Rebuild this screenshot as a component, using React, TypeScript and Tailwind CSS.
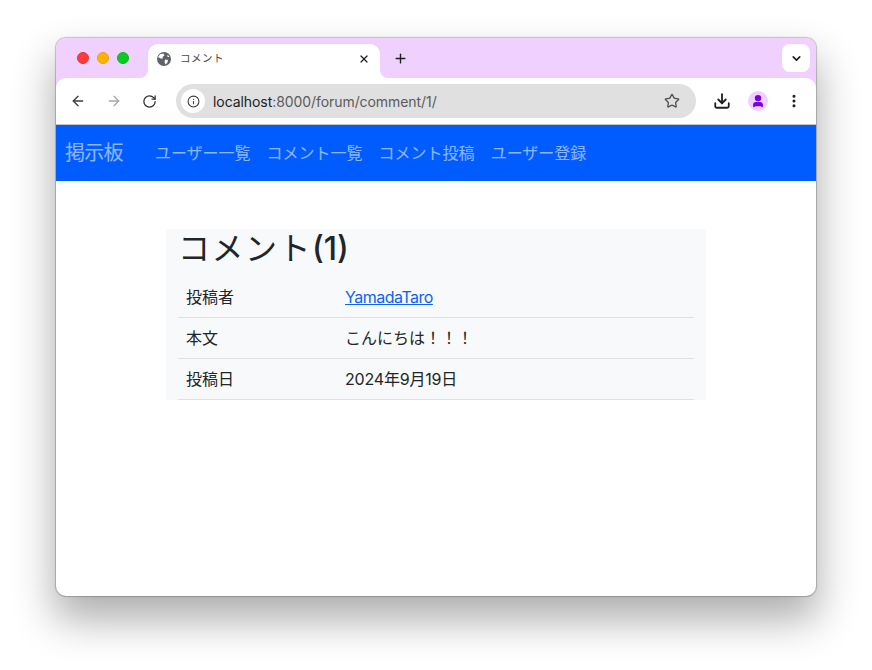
import { ArrowLeft, ArrowRight, RotateCw, Info, Star, Download, User, EllipsisVertical, X, Plus, ChevronDown } from "lucide-react";

const navItems = ["ユーザー一覧", "コメント一覧", "コメント投稿", "ユーザー登録"];
const rows = [
  { label: "投稿者", value: <a href="#" className="text-[#0a63f6] underline tracking-[-0.5px]">YamadaTaro</a> },
  { label: "本文", value: "こんにちは！！！" },
  { label: "投稿日", value: <span className="tracking-[-0.2px]">2024年9月19日</span> },
];

function Globe() {
  return (
    <svg width="14" height="14" viewBox="0 0 14 14" className="shrink-0">
      <circle cx="7" cy="7" r="7" fill="#5f6368" />
      <path d="M3 2.2 L6.5 1.5 L7.5 3.5 L5.5 5 L6 6.5 L3.5 6.5 L1 5 Z M8 7.5 L11 8 L10.5 10.5 L8.5 12.5 L7.5 10 Z M10.5 2.5 L12.5 5 L10.5 5 Z" fill="#ffffff" />
    </svg>
  );
}

export default function App() {
  return (
    <div className="w-[872px] h-[670px] bg-white pl-[56px] pt-[38px] overflow-hidden [font-family:Inter,'Noto_Sans_CJK_JP',sans-serif]">
      <div className="w-[760px] h-[558px] rounded-[10px] bg-white overflow-hidden flex flex-col shadow-[0_0_1px_1px_rgba(0,0,0,0.22),0_22px_42px_2px_rgba(0,0,0,0.32)]">
        <div className="bg-[#f0d0ff] shrink-0">
          <div className="h-[40px] flex relative">
            <div className="flex items-center gap-[8px] pl-[21px] w-[92px]">
              <span className="w-[12px] h-[12px] rounded-full bg-[#ff3b3b] border border-[#e83535]" />
              <span className="w-[12px] h-[12px] rounded-full bg-[#ffb300] border border-[#eba500]" />
              <span className="w-[12px] h-[12px] rounded-full bg-[#08cc1e] border border-[#0cb81c]" />
            </div>
            <div className="mt-[6px] w-[232px] h-[34px] bg-white rounded-t-[10px] flex items-center pl-[9px] pr-[10px] pb-[5px] relative">
              <svg width="8" height="8" viewBox="0 0 8 8" className="absolute left-[-8px] bottom-0">
                <path d="M8 0 A8 8 0 0 1 0 8 L8 8 Z" fill="#ffffff" />
              </svg>
              <svg width="8" height="8" viewBox="0 0 8 8" className="absolute right-[-8px] bottom-0">
                <path d="M0 0 A8 8 0 0 0 8 8 L0 8 Z" fill="#ffffff" />
              </svg>
              <Globe />
              <span className="ml-[9px] text-[10.5px] text-[#45474a] tracking-[0.5px]">コメント</span>
              <X className="ml-auto text-[#1f1f1f]" size={12} strokeWidth={2.4} />
            </div>
            <Plus className="ml-[13px] mt-[13px] text-[#1f1f1f]" size={15} strokeWidth={2.2} />
            <div className="absolute right-[6px] top-[6px] w-[28px] h-[28px] bg-white rounded-[8px] flex items-center justify-center">
              <ChevronDown className="text-[#1f1f1f]" size={13} strokeWidth={3} />
            </div>
          </div>
          <div className="h-[46px] bg-white rounded-t-[10px] flex items-center pl-[14px] pr-[14px]">
            <ArrowLeft size={16} strokeWidth={2} className="text-[#3c3c3c]" />
            <ArrowRight size={16} strokeWidth={2} className="ml-[20px] text-[#a8a8a8]" />
            <RotateCw size={15} strokeWidth={2} className="ml-[20px] text-[#2e2e2e]" />
            <div className="ml-[19px] w-[520px] h-[34px] rounded-full bg-[#e0e0e0] flex items-center pl-[5px] pr-[16px]">
              <span className="w-[24px] h-[24px] rounded-full bg-white flex items-center justify-center">
                <Info size={13} strokeWidth={2} className="text-[#3c3c3c]" />
              </span>
              <span className="ml-[8px] text-[14px] tracking-[-0.07px] text-[#5b5b5b]"><span className="text-[#202124]">localhost</span>:8000/forum/comment/1/</span>
              <Star size={16} strokeWidth={2} className="ml-auto text-[#505050]" />
            </div>
            <Download size={18} strokeWidth={2.4} className="ml-[17px] text-[#1f1f1f]" />
            <span className="ml-[17px] w-[20px] h-[20px] rounded-full bg-[#f0d0ff] flex items-center justify-center">
              <User size={14} strokeWidth={3} fill="#7a00e0" className="text-[#7a00e0]" />
            </span>
            <EllipsisVertical size={16} strokeWidth={2.6} className="ml-[18px] text-[#1f1f1f]" />
          </div>
        </div>
        <div className="h-[1px] bg-[#c4c4c4] shrink-0" />
        <nav className="h-[56px] bg-[#005cff] flex items-center pl-[9px] shrink-0">
          <span className="text-[20px] tracking-[-0.7px] text-white/55">掲示板</span>
          <div className="flex ml-[24px]">
            {navItems.map((n) => (
              <span key={n} className="px-[8px] text-[16px] text-white/55">{n}</span>
            ))}
          </div>
        </nav>
        <main className="pt-[48px] pl-[110px]">
          <div className="w-[540px] bg-[#f8f9fa] px-[12px] h-[171px]">
            <h2 className="text-[32px] leading-[40px] mb-[8px] text-[#212529] font-normal">
              <span className="tracking-[1.5px]">コメント</span>
              <span className="font-medium">(1)</span>
            </h2>
            <div>
              {rows.map((r) => (
                <div key={r.label} className="flex h-[41px] items-center px-[8px] border-b border-[#dee2e6] text-[16px] text-[#212529]">
                  <span className="w-[159px]">{r.label}</span>
                  <span>{r.value}</span>
                </div>
              ))}
            </div>
          </div>
        </main>
      </div>
    </div>
  );
}
